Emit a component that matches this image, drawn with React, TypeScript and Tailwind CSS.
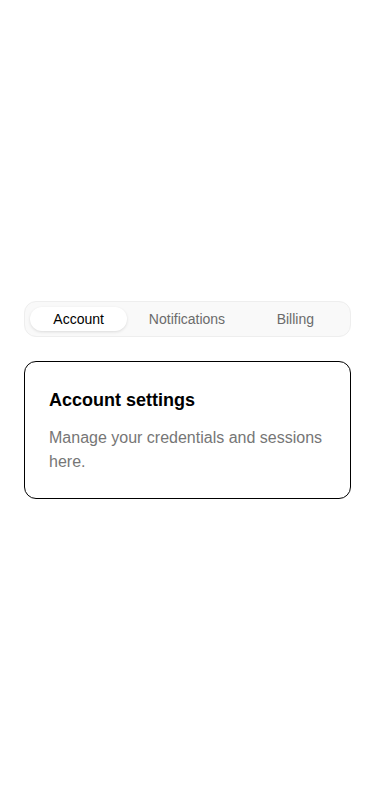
import React, { useState } from "react";

const tabs = [
  { id: "account", label: "Account", title: "Account settings", body: "Manage your credentials and sessions here." },
  { id: "notifications", label: "Notifications", title: "Notifications", body: "Choose what you want to be notified about." },
  { id: "billing", label: "Billing", title: "Billing", body: "Update your plan and payment methods." },
];

const App: React.FC = () => {
  const [active, setActive] = useState("account");
  const current = tabs.find((t) => t.id === active)!;

  return (
    <div
      className="min-h-screen bg-white flex flex-col justify-center px-6"
      style={{ fontFamily: '"Liberation Sans", Arial, sans-serif' }}
    >
      {/* Tab list */}
      <div className="grid grid-cols-3 rounded-xl border border-[#eeeeee] bg-[#f9f9f9] py-[5px]">
        {tabs.map((tab) => (
          <button
            key={tab.id}
            onClick={() => setActive(tab.id)}
            className="pl-[5px] pr-[6px]"
          >
            <span
              className={`block h-6 rounded-full text-sm leading-6 ${
                active === tab.id
                  ? "bg-white text-black shadow-[0_1px_3px_rgba(0,0,0,0.12)]"
                  : "text-[#6b6b6b]"
              }`}
            >
              {tab.label}
            </span>
          </button>
        ))}
      </div>

      {/* Panel */}
      <div className="mt-6 rounded-xl border border-black bg-white p-6">
        <h2 className="text-lg leading-7 font-bold text-black">{current.title}</h2>
        <p className="mt-3 text-base leading-6 text-[#767676]">{current.body}</p>
      </div>
    </div>
  );
};

export default App;
